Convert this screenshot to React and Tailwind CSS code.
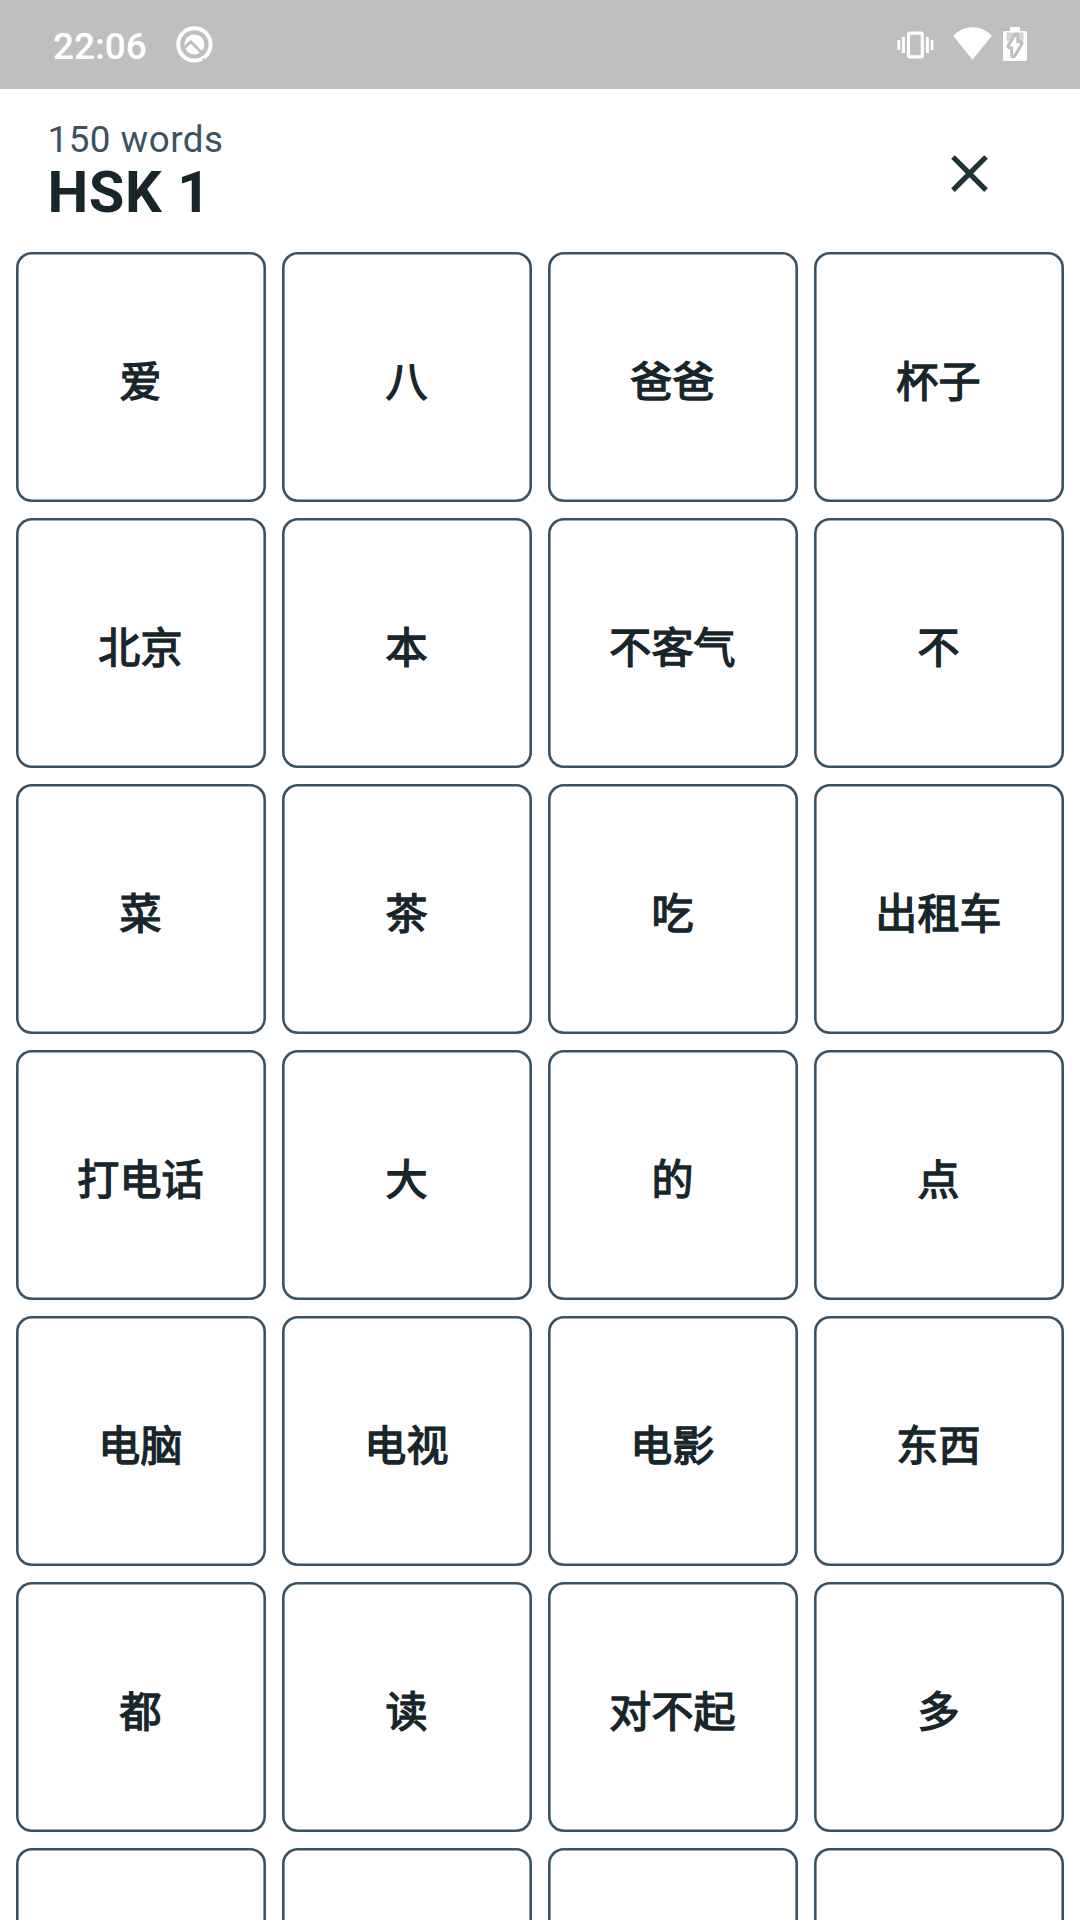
const WORDS = [
  '爱', '八', '爸爸', '杯子',
  '北京', '本', '不客气', '不',
  '菜', '茶', '吃', '出租车',
  '打电话', '大', '的', '点',
  '电脑', '电视', '电影', '东西',
  '都', '读', '对不起', '多',
  '', '', '', '',
];

function AndroidQIcon() {
  return (
    <svg viewBox="0 0 38 38" className="w-[38px] h-[38px]" fill="none">
      <circle cx="19.4" cy="19.4" r="16.2" stroke="white" strokeWidth="4" />
      <circle cx="19.4" cy="19.4" r="10" fill="white" />
      <path d="M7.5 24.5L15.8 16.8L28.5 29.5" stroke="#bfbfbf" strokeWidth="2.8" />
      <path d="M27.6 33.4L31 36.4" stroke="#bfbfbf" strokeWidth="2" />
    </svg>
  );
}

function VibrateIcon() {
  return (
    <svg viewBox="0 0 37 28" className="w-[37px] h-7" fill="none" stroke="white">
      <rect x="11.5" y="2.1" width="13.8" height="23.8" rx="1.6" strokeWidth="3.2" />
      <path d="M6.4 6V22M30.4 6V22" strokeWidth="3" />
      <path d="M1.8 9V19M35 9V19" strokeWidth="2.8" />
    </svg>
  );
}

function WifiIcon() {
  return (
    <svg viewBox="0 0 39 34" className="w-[39px] h-[34px]" fill="white">
      <path d="M0.2 8.8C5.2 3.4 12 0.2 19.5 0.2S33.8 3.4 38.8 8.8L19.5 32.8Z" />
    </svg>
  );
}

function BatteryIcon() {
  return (
    <svg viewBox="0 0 24 34" className="w-6 h-[34px]" strokeLinejoin="round">
      <path d="M7 0H17V4H22.5A1.5 1.5 0 0 1 24 5.5V32.5A1.5 1.5 0 0 1 22.5 34H1.5A1.5 1.5 0 0 1 0 32.5V5.5A1.5 1.5 0 0 1 1.5 4H7Z" fill="white" />
      <path d="M3.5 5.5H20.5V14H3.5Z" fill="#d4d4d4" />
      <path d="M13.3 8.5L6.5 19.2H10.2V28.5L17.5 16.2H13.3Z" fill="#bfbfbf" stroke="#bfbfbf" strokeWidth="6" />
      <path d="M13.3 8.5L6.5 19.2H10.2V28.5L17.5 16.2H13.3Z" fill="white" />
    </svg>
  );
}

function StatusBar() {
  return (
    <div className="h-[89px] bg-[#bfbfbf] flex items-center justify-between pl-[53px] pr-[53px] pb-px shrink-0">
      <div className="flex items-center gap-7">
        <span className="text-[37px] leading-none font-medium text-white pt-[5px]">22:06</span>
        <AndroidQIcon />
      </div>
      <div className="flex items-center">
        <div className="pt-px"><VibrateIcon /></div>
        <div className="ml-[19px]"><WifiIcon /></div>
        <div className="ml-[11px]"><BatteryIcon /></div>
      </div>
    </div>
  );
}

export default function App() {
  return (
    <div className="w-[1080px] h-[1920px] bg-white overflow-hidden flex flex-col font-[Roboto,'Noto_Sans_CJK_SC',sans-serif]">
      <StatusBar />

      <header className="h-[163px] shrink-0 flex items-start justify-between pl-[47.5px] pr-[79px]">
        <div className="pt-[29px]">
          <p className="text-[36.75px] leading-[44px] tracking-[0.5px] text-[#3a5261]">150 words</p>
          <h1 className="text-[57.75px] leading-[60px] tracking-[0.6px] font-bold text-[#17262b]">HSK 1</h1>
        </div>
        <button aria-label="Close" className="mt-[53px]">
          <svg viewBox="0 0 24 24" className="w-[63px] h-[63px]" fill="#203437">
            <path d="M19 6.41L17.59 5L12 10.59L6.41 5L5 6.41L10.59 12L5 17.59L6.41 19L12 13.41L17.59 19L19 17.59L13.41 12Z" />
          </svg>
        </button>
      </header>

      <main lang="zh-CN" className="grid grid-cols-[repeat(4,250px)] auto-rows-[250px] gap-4 px-4">
        {WORDS.map((word, i) => (
          <div
            key={i}
            className="flex items-center justify-center rounded-[15.75px] shadow-[inset_0_0_0_2.6px_#3a5261] text-[42px] tracking-[0.2px] text-[#17262b] [-webkit-text-stroke:1.4px_#17262b] pt-[10px] pr-px"
          >
            {word}
          </div>
        ))}
      </main>
    </div>
  );
}
